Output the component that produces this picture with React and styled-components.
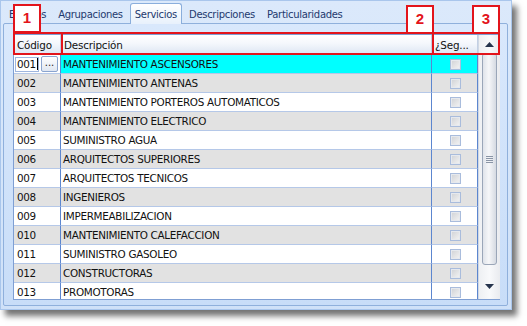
import React from "react";
import styled, { createGlobalStyle } from "styled-components";

const Global = createGlobalStyle`
  html, body { margin: 0; padding: 0; background: #ffffff; }
  body { font-family: Tahoma, "DejaVu Sans", "Liberation Sans", sans-serif; }
  #root { width: 527px; height: 326px; overflow: hidden; }
`;

const Page = styled.div`
  position: relative;
  width: 527px;
  height: 326px;
  background: #fff;
`;

const Window = styled.div`
  position: relative;
  width: 510px;
  height: 308px;
  display: flex;
  flex-direction: column;
  background: linear-gradient(#dbe9fb, #cfe1f8);
  border: 1px solid #a9c6ec;
  box-shadow: 5px 6px 6px rgba(0, 0, 0, 0.55);
`;

const TabStrip = styled.div`
  height: 22px;
  display: flex;
  align-items: flex-end;
  padding-left: 3px;
  gap: 2px;
`;

const Tab = styled.div`
  height: ${(p) => (p.$active ? 21 : 19)}px;
  padding: 0 4px;
  display: flex;
  align-items: center;
  font-family: "DejaVu Sans", sans-serif;
  font-size: 10px;
  letter-spacing: -0.3px;
  color: #1e3a6e;
  box-sizing: border-box;
  border: 1px solid ${(p) => (p.$active ? "#8aaedc" : "transparent")};
  border-bottom: none;
  border-radius: 3px 3px 0 0;
  background: ${(p) => (p.$active ? "linear-gradient(#ffffff, #e8f1fc)" : "transparent")};
  margin-bottom: ${(p) => (p.$active ? -1 : 0)}px;
  position: relative;
  z-index: 1;
`;

const Panel = styled.div`
  flex: 1;
  margin: 0 3px 3px 2px;
  border: 1px solid #8fb0dc;
  border-radius: 2px;
  background: linear-gradient(#d9e8fc, #c8ddf8);
  padding: 10px 6px 0 9px;
  display: flex;
`;

const Grid = styled.div`
  width: 487px;
  height: 266px;
  display: flex;
  border: 1px solid #7f9fd3;
  border-right: none;
  box-sizing: border-box;
  background: #fff;
  overflow: hidden;
`;

const Table = styled.div`
  width: 465px;
  display: grid;
  grid-template-columns: 47px 371px 46px;
  grid-auto-rows: 19px;
  grid-template-rows: 20px;
  align-content: start;
`;

const HeadCell = styled.div`
  display: flex;
  align-items: center;
  padding-left: ${(p) => p.$pad || 3}px;
  font-family: "DejaVu Sans", sans-serif;
  font-size: 10.4px;
  letter-spacing: -0.2px;
  color: #111;
  background: linear-gradient(#ffffff 0%, #f4f7fc 45%, #dde6f3 100%);
  border-right: 1px solid #c3d0e4;
  border-bottom: 1px solid #a6bbdc;
  box-sizing: border-box;
`;

const Cell = styled.div`
  display: flex;
  align-items: center;
  padding-left: ${(p) => p.$pad || 2}px;
  font-family: "DejaVu Sans", sans-serif;
  font-size: 10.4px;
  letter-spacing: -0.3px;
  color: #111;
  box-sizing: border-box;
  background: ${(p) => p.$bg};
  border-right: 1px solid #5c86cf;
  border-bottom: 1px solid #b5c8e8;
  justify-content: ${(p) => (p.$center ? "center" : "flex-start")};
  overflow: hidden;
  white-space: nowrap;
`;

const EditCell = styled.div`
  display: flex;
  align-items: center;
  background: #fff;
  border-right: 1px solid #5c86cf;
  border-bottom: 1px solid #b5c8e8;
  box-sizing: border-box;
  padding: 1px;
  gap: 2px;
`;

const EditText = styled.div`
  height: 15px;
  width: 24px;
  display: flex;
  align-items: center;
  padding-left: 1px;
  font-family: "DejaVu Sans", sans-serif;
  font-size: 10.4px;
  letter-spacing: -0.3px;
  color: #111;
  border: 1px solid #9fb6de;
  box-sizing: border-box;
  &::after {
    content: "";
    width: 1px;
    height: 12px;
    background: #000;
    margin-left: 1px;
  }
`;

const DotsButton = styled.div`
  width: 17px;
  height: 16px;
  box-sizing: border-box;
  border: 1px solid #8aa4cf;
  border-radius: 2px;
  background: linear-gradient(#ffffff, #dfe6f1);
  font-family: "DejaVu Sans", sans-serif;
  font-size: 10px;
  color: #222;
  display: flex;
  align-items: flex-end;
  justify-content: center;
  line-height: 1;
  padding-bottom: 3px;
`;

const Check = styled.div`
  width: 11px;
  height: 11px;
  box-sizing: border-box;
  border: 1px solid #a9bcdc;
  background: linear-gradient(135deg, #cfd1d5, #f4f4f4);
  box-shadow: inset 0 0 0 1px #e6e9ee;
`;

const ScrollBar = styled.div`
  width: 22px;
  display: flex;
  flex-direction: column;
  background: linear-gradient(90deg, #eef0f3, #f8f9fb 50%, #e9ebef);
  border-left: 1px solid #d0d8e4;
  box-sizing: border-box;
`;

const ArrowButton = styled.div`
  height: ${(p) => p.$h}px;
  display: flex;
  align-items: center;
  justify-content: center;
  flex-shrink: 0;
`;

const Track = styled.div`
  flex: 1;
  padding: 0 3px;
  display: flex;
  flex-direction: column;
`;

const Thumb = styled.div`
  height: 210px;
  border: 1px solid #9aa6b8;
  border-radius: 3px;
  background: linear-gradient(90deg, #dfe3ea, #f6f7f9 45%, #d5dae2);
  display: flex;
  flex-direction: column;
  align-items: center;
  justify-content: center;
  gap: 1px;
`;

const Grip = styled.div`
  width: 7px;
  height: 1px;
  background: #8a95a6;
`;

const Mark = styled.div`
  position: absolute;
  z-index: 10;
  left: ${(p) => p.$x}px;
  top: ${(p) => p.$y}px;
  width: ${(p) => p.$w}px;
  height: ${(p) => p.$h}px;
  border: 2px solid #e3141b;
  box-sizing: border-box;
  pointer-events: none;
`;

const Badge = styled(Mark)`
  background: #ffffff;
  display: flex;
  align-items: center;
  justify-content: center;
  font-family: "Liberation Sans", Arial, sans-serif;
  font-weight: bold;
  font-size: 15px;
  color: #e3141b;
  padding-bottom: 2px;
`;

const rows = [
  ["001", "MANTENIMIENTO ASCENSORES"],
  ["002", "MANTENIMIENTO ANTENAS"],
  ["003", "MANTENIMIENTO PORTEROS AUTOMATICOS"],
  ["004", "MANTENIMIENTO ELECTRICO"],
  ["005", "SUMINISTRO AGUA"],
  ["006", "ARQUITECTOS SUPERIORES"],
  ["007", "ARQUITECTOS TECNICOS"],
  ["008", "INGENIEROS"],
  ["009", "IMPERMEABILIZACION"],
  ["010", "MANTENIMIENTO CALEFACCION"],
  ["011", "SUMINISTRO GASOLEO"],
  ["012", "CONSTRUCTORAS"],
  ["013", "PROMOTORAS"],
];

const UpArrow = () => (
  <svg width="9" height="5" viewBox="0 0 9 5">
    <path d="M0 5 L4.5 0 L9 5 Z" fill="#26344d" />
  </svg>
);
const DownArrow = () => (
  <svg width="9" height="5" viewBox="0 0 9 5">
    <path d="M0 0 L4.5 5 L9 0 Z" fill="#26344d" />
  </svg>
);

export default function App() {
  return (
    <Page>
      <Global />
      <Window>
        <TabStrip>
          <Tab>Estados</Tab>
          <Tab>Agrupaciones</Tab>
          <Tab $active>Servicios</Tab>
          <Tab>Descripciones</Tab>
          <Tab>Particularidades</Tab>
        </TabStrip>
        <Panel>
          <Grid>
            <Table>
              <HeadCell $pad={3}>Código</HeadCell>
              <HeadCell $pad={3}>Descripción</HeadCell>
              <HeadCell $pad={3}>¿Seg...</HeadCell>
              {rows.map(([code, desc], i) => {
                const bg = i === 0 ? "#00ffff" : i % 2 === 1 ? "#e2e2e2" : "#ffffff";
                return (
                  <React.Fragment key={code}>
                    {i === 0 ? (
                      <EditCell>
                        <EditText>{code}</EditText>
                        <DotsButton>...</DotsButton>
                      </EditCell>
                    ) : (
                      <Cell $bg={bg} $pad={3}>{code}</Cell>
                    )}
                    <Cell $bg={bg}>{desc}</Cell>
                    <Cell $bg={bg} $center>
                      <Check />
                    </Cell>
                  </React.Fragment>
                );
              })}
            </Table>
            <ScrollBar>
              <ArrowButton $h={18}>
                <UpArrow />
              </ArrowButton>
              <Track>
                <Thumb>
                  <Grip />
                  <Grip />
                  <Grip />
                  <Grip />
                </Thumb>
              </Track>
              <ArrowButton $h={26}>
                <DownArrow />
              </ArrowButton>
            </ScrollBar>
          </Grid>
        </Panel>
        <Badge $x={12} $y={3} $w={28} $h={29}>1</Badge>
        <Badge $x={405} $y={4} $w={28} $h={29}>2</Badge>
        <Badge $x={471} $y={4} $w={28} $h={29}>3</Badge>
        <Mark $x={12} $y={31} $w={50} $h={23} />
        <Mark $x={60} $y={31} $w={373} $h={23} />
        <Mark $x={431} $y={31} $w={68} $h={23} />
      </Window>
    </Page>
  );
}
